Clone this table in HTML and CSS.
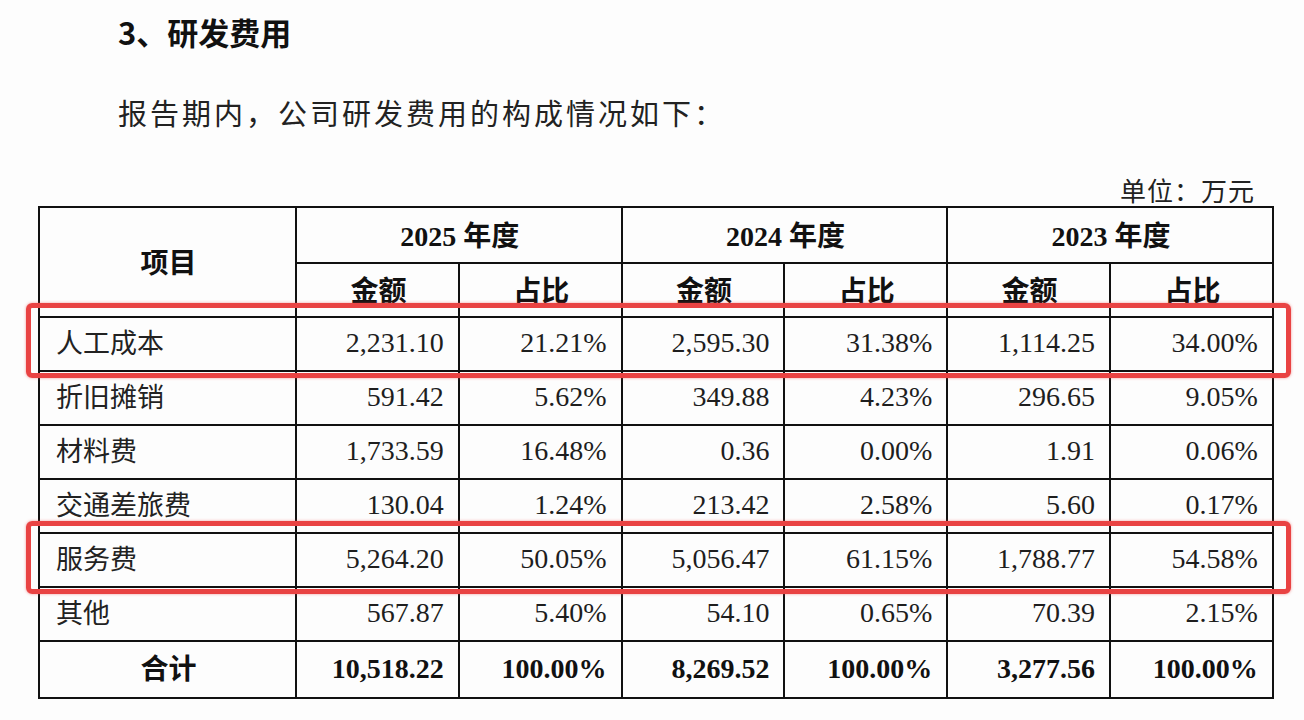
FILE: index.html
```html
<!DOCTYPE html>
<html lang="zh-CN">
<head>
<meta charset="utf-8">
<title>研发费用</title>
<link rel="stylesheet" href="styles.css">
</head>
<body>
<div class="page">
  <h2 class="title">3、研发费用</h2>
  <p class="intro">报告期内，公司研发费用的构成情况如下：</p>
  <div class="unit">单位：万元</div>
  <div class="table-wrap">
    <table class="fee">
      <colgroup>
        <col class="c-item"><col class="c-num"><col class="c-num"><col class="c-num"><col class="c-num"><col class="c-num"><col class="c-num">
      </colgroup>
      <thead>
        <tr class="h1">
          <th rowspan="2" class="item-h">项目</th>
          <th colspan="2">2025 年度</th>
          <th colspan="2">2024 年度</th>
          <th colspan="2">2023 年度</th>
        </tr>
        <tr class="h2">
          <th>金额</th><th>占比</th><th>金额</th><th>占比</th><th>金额</th><th>占比</th>
        </tr>
      </thead>
      <tbody>
        <tr><td class="lbl">人工成本</td><td>2,231.10</td><td>21.21%</td><td>2,595.30</td><td>31.38%</td><td>1,114.25</td><td>34.00%</td></tr>
        <tr><td class="lbl">折旧摊销</td><td>591.42</td><td>5.62%</td><td>349.88</td><td>4.23%</td><td>296.65</td><td>9.05%</td></tr>
        <tr><td class="lbl">材料费</td><td>1,733.59</td><td>16.48%</td><td>0.36</td><td>0.00%</td><td>1.91</td><td>0.06%</td></tr>
        <tr><td class="lbl">交通差旅费</td><td>130.04</td><td>1.24%</td><td>213.42</td><td>2.58%</td><td>5.60</td><td>0.17%</td></tr>
        <tr><td class="lbl">服务费</td><td>5,264.20</td><td>50.05%</td><td>5,056.47</td><td>61.15%</td><td>1,788.77</td><td>54.58%</td></tr>
        <tr><td class="lbl">其他</td><td>567.87</td><td>5.40%</td><td>54.10</td><td>0.65%</td><td>70.39</td><td>2.15%</td></tr>
        <tr class="total"><td class="lbl">合计</td><td>10,518.22</td><td>100.00%</td><td>8,269.52</td><td>100.00%</td><td>3,277.56</td><td>100.00%</td></tr>
      </tbody>
    </table>
    <div class="mark mark-1"></div>
    <div class="mark mark-2"></div>
  </div>
</div>
</body>
</html>
```
FILE: styles.css
```css
html, body {
  margin: 0;
  padding: 0;
  background: #fdfdfd;
}
body {
  font-family: "Noto Sans CJK SC", sans-serif;
  color: #1c1c1c;
}
.page {
  width: 1304px;
  height: 720px;
  padding: 12px 32px 0 38px;
  box-sizing: border-box;
  overflow: hidden;
}
.title {
  margin: 0 0 0 80px;
  font-size: 31px;
  line-height: 40px;
  font-weight: 700;
  color: #111;
}
.intro {
  margin: 40px 0 0 80px;
  font-size: 29px;
  line-height: 40px;
  letter-spacing: 3px;
  font-weight: 400;
  color: #222;
}
.unit {
  margin-top: 41px;
  padding-right: 17px;
  text-align: right;
  font-size: 26px;
  line-height: 33px;
  letter-spacing: 1px;
  color: #222;
}
.table-wrap {
  position: relative;
  width: 1234px;
}
.fee {
  width: 1234px;
  border-collapse: collapse;
  table-layout: fixed;
  font-family: "Liberation Serif", "Noto Sans CJK SC", serif;
  color: #1e1e1e;
}
.c-item { width: 257px; }
.c-num { width: 162.8px; }
.fee th, .fee td {
  border: 2px solid #111;
  padding: 0 14px 2px 16px;
  font-size: 28px;
  box-sizing: border-box;
}
.fee th {
  font-weight: 700;
  text-align: center;
  color: #111;
}
.h1 { height: 56px; }
.h2 { height: 54px; }
.fee tbody tr { height: 54px; }
.fee td {
  text-align: right;
}
.fee td.lbl {
  text-align: left;
  font-family: "Noto Sans CJK SC", sans-serif;
  font-size: 27px;
  padding-bottom: 5px;
  color: #222;
}
.fee tr.total { height: 57px; }
.fee tr.total td {
  font-weight: 700;
  color: #111;
}
.fee tr.total td.lbl {
  text-align: center;
  font-weight: 700;
  font-size: 28px;
}
.mark {
  position: absolute;
  left: -12px;
  width: 1265px;
  border: 5px solid #e94343;
  border-radius: 6px;
  box-sizing: border-box;
  box-shadow: 0 0 3px rgba(233, 67, 67, 0.55);
  pointer-events: none;
}
.mark-1 { top: 97px; height: 75px; }
.mark-2 { top: 315px; height: 73px; }
```
